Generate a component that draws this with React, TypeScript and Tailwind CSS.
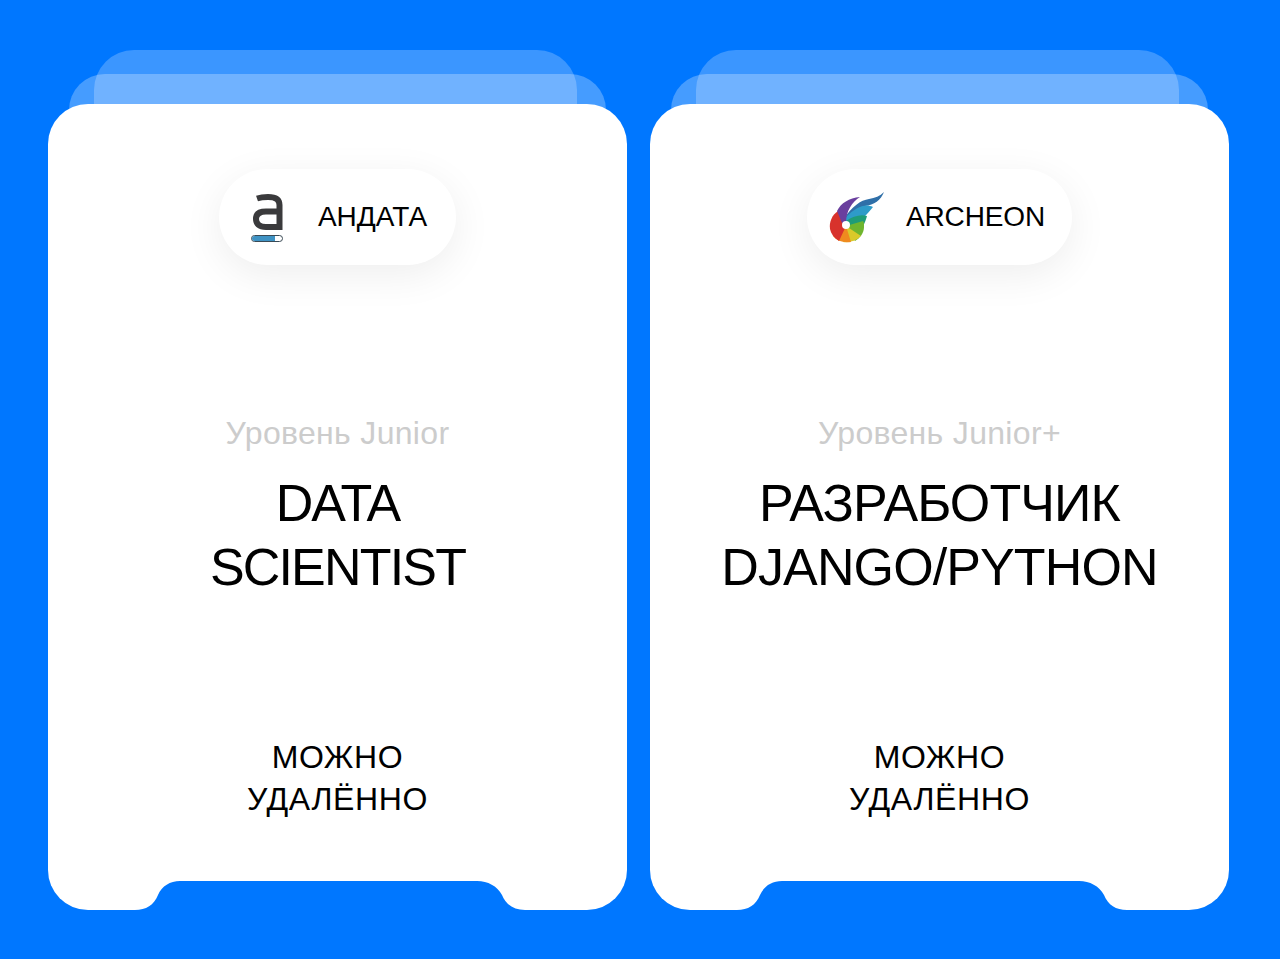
import { FC, ReactNode } from "react";

const AndataLogo = () => (
  <svg width="34" height="52" viewBox="0 0 34 52" fill="none">
    <path
      d="M7 7.5C10 6.5 14 6 18 6C26 6 29.5 8.5 29.5 14V36H16C9 36 6 32.5 6 28C6 23 9 20.5 16 20.5H29.5"
      stroke="#3a3a3c"
      strokeWidth="6"
    />
    <rect x="1.5" y="44.5" width="31" height="6" rx="3" fill="#fff" stroke="#3a4a55" strokeWidth="1" />
    <path d="M4.5 45H25V50H4.5C3 50 2 48.9 2 47.5C2 46.1 3 45 4.5 45Z" fill="#3f93c4" />
  </svg>
);

const feathers = [
  { d: "M15 28C22 16 32 9 40 8C46 7 51 5 55 1C52 9 45 14 36 15C29 17 23 22 19 30Z", fill: "#2f6fa8" },
  { d: "M17 33C22 30 30 26 34 27C38 23 41 20 44 16C36 12 27 16 17 26Z", fill: "#2e9bc9" },
  { d: "M17 35L34 35C36 32 37 28 38 25C32 23 24 25 17 30Z", fill: "#1f9c78" },
  { d: "M17 35L26 50C31 47 35 42 35 36C35 33 35 31 34 30Z", fill: "#6fb52f" },
  { d: "M17 35L14 51C20 52 27 50 32 45Z", fill: "#d9c92a" },
  { d: "M17 35L4 45C8 50 14 52 22 51Z", fill: "#ef8a1f" },
  { d: "M17 35L9 20C3 24 0 31 1 38C2 43 5 47 10 50Z", fill: "#d8322c" },
  { d: "M17 32C17 20 23 11 31 6C20 7 12 12 8 20L13 32Z", fill: "#6a3f9e" },
];

const ArcheonLogo = () => (
  <svg width="58" height="52" viewBox="0 0 58 52">
    {feathers.map((f) => (
      <path key={f.fill} d={f.d} fill={f.fill} />
    ))}
    <circle cx="17" cy="34" r="4" fill="#fff" />
  </svg>
);

interface CardProps {
  logo: ReactNode;
  company: string;
  pillClass: string;
  level: string;
  title: string[];
  titleClass: string;
}

const Card: FC<CardProps> = ({ logo, company, pillClass, level, title, titleClass }) => {
  return (
    <div className="relative w-[579px] h-[806px] mt-[54px]">
      {/* stacked sheets behind the card */}
      <div className="absolute left-[46px] right-[50px] top-[-54px] h-[60px] rounded-t-[40px] bg-white/[0.23]" />
      <div className="absolute left-[21px] right-[21px] top-[-30px] h-[36px] rounded-t-[40px] bg-white/[0.27]" />
      <div className="relative h-full rounded-[40px] bg-white flex flex-col items-center pt-[65px]">
        <div className={`flex items-center h-[96px] rounded-full bg-white shadow-[0_10px_40px_rgba(0,0,0,0.07)] ${pillClass}`}>
          {logo}
          <span className="text-[28px] text-black">{company}</span>
        </div>
        <p className="mt-[146px] text-[32px] leading-[44px] tracking-[0.01em] text-[#cccccc]">{level}</p>
        <h2 className={`mt-[16px] text-center text-[52px] leading-[64px] text-black font-normal ${titleClass}`}>
          {title.map((line) => (
            <div key={line}>{line}</div>
          ))}
        </h2>
        <p className="mt-[137px] text-center text-[32px] leading-[42px] tracking-[0.02em] text-black">
          МОЖНО
          <br />
          УДАЛЁННО
        </p>
      </div>
      {/* notch cut out of the bottom edge */}
      <svg className="absolute left-[84px] bottom-0" width="400" height="30" viewBox="0 0 400 30">
        <path
          d="M3 30C14 30 22 25 26 15C30 6 38 1 48 1H345C356 1 365 6 370 15C374 25 382 30 393 30Z"
          fill="#0077ff"
        />
      </svg>
    </div>
  );
};

export default function App() {
  return (
    <div className="w-[1280px] h-[959px] bg-[#0077ff] flex gap-[23px] pl-[48px] pt-[50px] overflow-hidden font-['Liberation_Sans',Arial,sans-serif]">
      <Card
        logo={<AndataLogo />}
        company="АНДАТА"
        pillClass="pl-[31px] pr-[29px] gap-[34px]"
        level="Уровень Junior"
        title={["DATA", "SCIENTIST"]}
        titleClass="tracking-[-0.035em]"
      />
      <Card
        logo={<ArcheonLogo />}
        company="ARCHEON"
        pillClass="pl-[22px] pr-[27px] gap-[19px] tracking-[-0.01em]"
        level="Уровень Junior+"
        title={["РАЗРАБОТЧИК", "DJANGO/PYTHON"]}
        titleClass="tracking-[-0.017em]"
      />
    </div>
  );
}
